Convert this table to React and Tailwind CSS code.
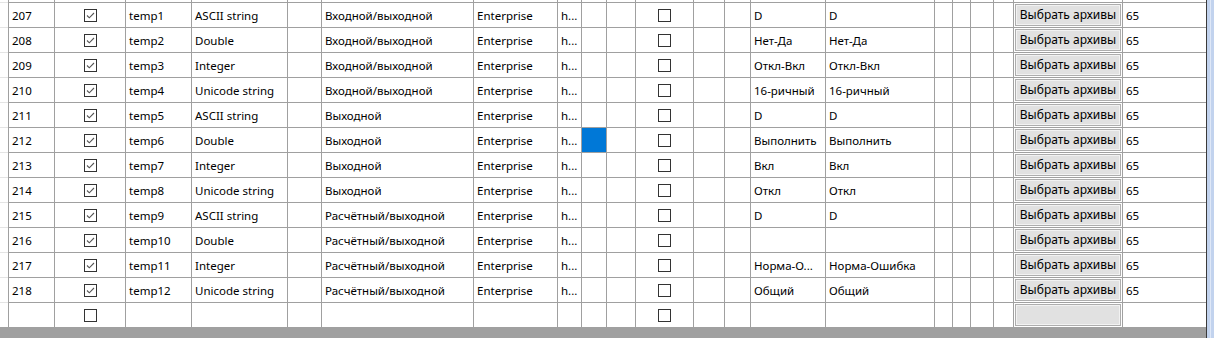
const rows = [
  [207, 'temp1', 'ASCII string', 'Входной/выходной', 'D', 'D'],
  [208, 'temp2', 'Double', 'Входной/выходной', 'Нет-Да', 'Нет-Да'],
  [209, 'temp3', 'Integer', 'Входной/выходной', 'Откл-Вкл', 'Откл-Вкл'],
  [210, 'temp4', 'Unicode string', 'Входной/выходной', '16-ричный', '16-ричный'],
  [211, 'temp5', 'ASCII string', 'Выходной', 'D', 'D'],
  [212, 'temp6', 'Double', 'Выходной', 'Выполнить', 'Выполнить'],
  [213, 'temp7', 'Integer', 'Выходной', 'Вкл', 'Вкл'],
  [214, 'temp8', 'Unicode string', 'Выходной', 'Откл', 'Откл'],
  [215, 'temp9', 'ASCII string', 'Расчётный/выходной', 'D', 'D'],
  [216, 'temp10', 'Double', 'Расчётный/выходной', '', ''],
  [217, 'temp11', 'Integer', 'Расчётный/выходной', 'Норма-О...', 'Норма-Ошибка'],
  [218, 'temp12', 'Unicode string', 'Расчётный/выходной', 'Общий', 'Общий'],
]

function Box({ checked }) {
  return (
    <div className="w-[13px] h-[13px] border border-[#333] bg-white flex items-center justify-center">
      {checked && (
        <svg width="11" height="11" viewBox="0 0 11 11">
          <path d="M2 5.5 L4.3 7.8 L9 3" fill="none" stroke="#555" strokeWidth="1.1" />
        </svg>
      )}
    </div>
  )
}

function Btn({ label }) {
  return (
    <div className="mx-[1px] h-[22px] w-[107px] border border-[#adadad] bg-[#e1e1e1] shadow-[inset_0_0_0_1px_#f2f2f2] flex items-center justify-center text-black text-[12px]">
      {label}
    </div>
  )
}

function Row({ r, h = 'h-[25px]', last }) {
  const line = last ? '' : 'border-b'
  const c = `${line} border-r border-[#a0a0a0] flex items-center shrink-0`
  const t = 'pl-[3px] pt-[1px] whitespace-nowrap overflow-hidden'
  return (
    <div className={`flex ${h}`}>
      <div className={`w-[8px] shrink-0 ${last ? '' : 'border-b border-[#e4e4e4]'}`} />
      <div className={`${c} border-l w-[47px] ${t}`}>{r && r[0]}</div>
      <div className={`${c} w-[71px] justify-center`}>{r !== undefined && <Box checked={!!r} />}</div>
      <div className={`${c} w-[66px] ${t}`}>{r && r[1]}</div>
      <div className={`${c} w-[96px] ${t}`}>{r && r[2]}</div>
      <div className={`${c} w-[34px]`} />
      <div className={`${c} w-[152px] ${t}`}>{r && r[3]}</div>
      <div className={`${c} w-[84px] ${t}`}>{r && 'Enterprise'}</div>
      <div className={`${c} w-[24px] ${t}`}>{r && 'h...'}</div>
      <div className={`${c} w-[25px] ${r && r[0] === 212 ? 'bg-[#0078d7]' : ''}`} />
      <div className={`${c} w-[29px]`} />
      <div className={`${c} w-[58px] justify-center`}>{r !== undefined && <Box />}</div>
      <div className={`${c} w-[31px]`} />
      <div className={`${c} w-[26px]`} />
      <div className={`${c} w-[75px] ${t}`}>{r && r[4]}</div>
      <div className={`${c} w-[109px] ${t}`}>{r && r[5]}</div>
      <div className={`${c} w-[18px]`} />
      <div className={`${c} w-[18px]`} />
      <div className={`${c} w-[23px]`} />
      <div className={`${c} w-[20px]`} />
      <div className={`${c} w-[109px]`}>{r !== undefined && <Btn label={r ? 'Выбрать архивы' : ''} />}</div>
      <div className={`${line} border-[#a0a0a0] flex items-center w-[84px] shrink-0 ${t}`}>{r && '65'}</div>
    </div>
  )
}

export default function App() {
  return (
    <div className="w-[1214px] h-[338px] overflow-hidden flex bg-white text-[11.5px] text-black font-['Segoe_UI','Noto_Sans',sans-serif]">
      <div className="w-[1206px] flex flex-col">
        <Row h="h-[3px]" />
        {rows.map((r) => (
          <Row key={r[0]} r={r} />
        ))}
        <Row r={null} h="h-[24px]" last />
        <div className="h-[11px] bg-[#a0a0a0]" />
      </div>
      <div className="w-[8px] border-l border-[#3a3a3a] bg-[#c2d3ee] flex">
        <div className="ml-[3px] w-[1px] bg-[#dfe8f7]" />
      </div>
    </div>
  )
}
